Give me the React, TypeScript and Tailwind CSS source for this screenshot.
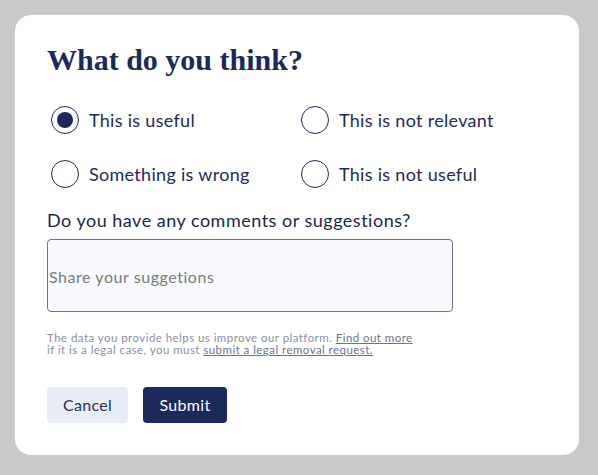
import { useState } from "react";

const options = [
  "This is useful",
  "This is not relevant",
  "Something is wrong",
  "This is not useful",
];

const body = { fontFamily: "Lato, 'Noto Sans', sans-serif" };

export default function App() {
  const [picked, setPicked] = useState("This is useful");

  return (
    <div className="min-h-screen w-full bg-[#c9c9c9] p-[15px]" style={body}>
      <div className="w-[564px] h-[440px] rounded-2xl bg-white px-8 pt-[26px]">
        {/* Title */}
        <h1
          className="text-[30px] leading-[38px] font-bold text-[#1b2a5b]"
          style={{ fontFamily: "'Liberation Serif', serif" }}
        >
          What do you think?
        </h1>

        {/* Options */}
        <div className="mt-[27px] grid grid-cols-[250px_250px] gap-y-[26px] pl-1">
          {options.map((o) => (
            <label
              key={o}
              className="flex items-center gap-[10px] cursor-pointer"
              onClick={() => setPicked(o)}
            >
              <span className="w-7 h-7 rounded-full border-[1.5px] border-[#1b2a5b] flex items-center justify-center">
                {picked === o && (
                  <span className="w-4 h-4 rounded-full bg-[#1b2a5b]"></span>
                )}
              </span>
              <span className="text-[18px] leading-7 tracking-[0.3px] text-[#1f2a5c]">{o}</span>
            </label>
          ))}
        </div>

        {/* Comment */}
        <p className="mt-[20px] text-[18px] leading-6 tracking-[0.5px] text-[#22264a]">
          Do you have any comments or suggestions?
        </p>
        <textarea
          placeholder="Share your suggetions"
          className="mt-[7px] block w-[406px] h-[73px] resize-none rounded border border-[#6b7390] bg-[#f9faff] px-[1px] pt-[25px] text-[16px] tracking-[0.55px] text-[#555] placeholder:text-[#7a7a7a] outline-none"
        />

        {/* Helper text */}
        <div className="mt-[20px] text-[11.5px] leading-[12px] tracking-[0.45px] text-[#8a90a3]">
          <p>
            The data you provide helps us improve our platform.{" "}
            <a href="#" className="underline text-[#6b7390]">Find out more</a>
          </p>
          <p>
            if it is a legal case, you must{" "}
            <a href="#" className="underline text-[#6b7390]">submit a legal removal request.</a>
          </p>
        </div>

        {/* Buttons */}
        <div className="mt-[31px] flex gap-[15px]">
          <button className="h-9 w-[81px] rounded bg-[#e9edf8] text-[16px] tracking-[0.3px] text-[#2b2d55]">
            Cancel
          </button>
          <button className="h-9 w-[84px] rounded bg-[#1b2a5b] text-[16px] tracking-[0.3px] text-white">
            Submit
          </button>
        </div>
      </div>
    </div>
  );
}
